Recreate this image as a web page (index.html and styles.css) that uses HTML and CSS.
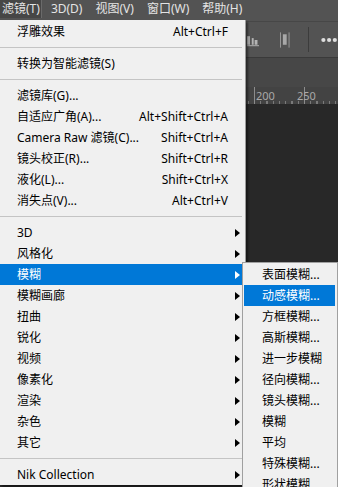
FILE: index.html
```html
<!DOCTYPE html>
<html lang="zh-CN">
<head>
    <meta charset="UTF-8">
    <meta name="viewport" content="width=device-width, initial-scale=1.0">
    <title>滤镜菜单</title>
    <link rel="stylesheet" href="styles.css">
</head>
<body>
    <div id="app">
        <div id="menubar">
            <span class="mb-item active">滤镜(T)</span>
            <span class="mb-item">3D(D)</span>
            <span class="mb-item">视图(V)</span>
            <span class="mb-item">窗口(W)</span>
            <span class="mb-item">帮助(H)</span>
        </div>
        <div id="toolbar">
            <svg class="ico-hist" width="13" height="14" viewBox="0 0 13 14">
                <rect x="0" y="3" width="3" height="9" fill="#b4b4b4"/>
                <rect x="5" y="5" width="2" height="7" fill="#b4b4b4"/>
                <rect x="8" y="7" width="3" height="5" fill="#b4b4b4"/>
                <rect x="0" y="12.5" width="13" height="1" fill="#b4b4b4"/>
            </svg>
            <svg class="ico-bracket" width="11" height="16" viewBox="0 0 11 16">
                <rect x="0" y="0" width="1" height="16" fill="#9a9a9a"/>
                <rect x="3" y="2" width="4" height="11" fill="#a8a8a8"/>
                <rect x="9" y="0" width="1" height="16" fill="#9a9a9a"/>
            </svg>
            <span class="tb-sep"></span>
            <svg class="ico-more" width="18" height="6" viewBox="0 0 18 6">
                <circle cx="2.5" cy="3" r="2.2" fill="#dedede"/>
                <circle cx="8.5" cy="3" r="2.2" fill="#dedede"/>
                <circle cx="14.5" cy="3" r="2.2" fill="#dedede"/>
            </svg>
        </div>
        <div id="options"></div>
        <div id="ruler"><span>200</span><span>250</span></div>
        <div id="canvas"></div>
    </div>

    <div class="menu">
        <div class="item"><span>浮雕效果</span><span>Alt+Ctrl+F</span></div>
        <div class="sep"></div>
        <div class="item"><span>转换为智能滤镜(S)</span></div>
        <div class="sep"></div>
        <div class="item"><span>滤镜库(G)...</span></div>
        <div class="item"><span>自适应广角(A)...</span><span>Alt+Shift+Ctrl+A</span></div>
        <div class="item"><span>Camera Raw 滤镜(C)...</span><span>Shift+Ctrl+A</span></div>
        <div class="item"><span>镜头校正(R)...</span><span>Shift+Ctrl+R</span></div>
        <div class="item"><span>液化(L)...</span><span>Shift+Ctrl+X</span></div>
        <div class="item"><span>消失点(V)...</span><span>Alt+Ctrl+V</span></div>
        <div class="sep"></div>
        <div class="item sub"><span>3D</span><i class="arrow"></i></div>
        <div class="item sub"><span>风格化</span><i class="arrow"></i></div>
        <div class="item sub active"><span>模糊</span><i class="arrow"></i></div>
        <div class="item sub"><span>模糊画廊</span><i class="arrow"></i></div>
        <div class="item sub"><span>扭曲</span><i class="arrow"></i></div>
        <div class="item sub"><span>锐化</span><i class="arrow"></i></div>
        <div class="item sub"><span>视频</span><i class="arrow"></i></div>
        <div class="item sub"><span>像素化</span><i class="arrow"></i></div>
        <div class="item sub"><span>渲染</span><i class="arrow"></i></div>
        <div class="item sub"><span>杂色</span><i class="arrow"></i></div>
        <div class="item sub"><span>其它</span><i class="arrow"></i></div>
        <div class="sep"></div>
        <div class="item sub"><span>Nik Collection</span><i class="arrow"></i></div>
    </div>

    <div class="submenu">
        <div class="item">表面模糊...</div>
        <div class="item active">动感模糊...</div>
        <div class="item">方框模糊...</div>
        <div class="item">高斯模糊...</div>
        <div class="item">进一步模糊</div>
        <div class="item">径向模糊...</div>
        <div class="item">镜头模糊...</div>
        <div class="item">模糊</div>
        <div class="item">平均</div>
        <div class="item">特殊模糊...</div>
        <div class="item">形状模糊...</div>
    </div>
</body>
</html>
```

FILE: styles.css
```css
body {
    margin: 0;
    width: 338px;
    height: 487px;
    overflow: hidden;
    position: relative;
    background: #282828;
    font-family: "Noto Sans", "Noto Sans CJK SC", sans-serif;
    font-size: 12px;
}
#app {
    display: flex;
    flex-direction: column;
    height: 100%;
}
#menubar {
    height: 21px;
    background: #535353;
    border-bottom: 1px solid #474747;
    display: flex;
    color: #e4e4e4;
}
.mb-item {
    line-height: 18px;
    height: 18px;
    padding: 0 1px 0 2px;
    margin-right: 10px;
    white-space: nowrap;
}
.mb-item.active {
    background: #464646;
    border-right: 1px solid #6a6a6a;
    margin-right: 7px;
}
#toolbar {
    height: 35px;
    background: #535353;
    border-bottom: 1px solid #3a3a3a;
    display: flex;
    align-items: center;
    padding-left: 247px;
}
.ico-hist {
    margin-right: 21px;
}
.ico-bracket {
    margin-right: 17px;
}
.tb-sep {
    width: 1px;
    height: 25px;
    background: #3c3c3c;
    margin-right: 12px;
}
#options {
    height: 29px;
    background: #474747;
}
#ruler {
    height: 17px;
    background-color: #434343;
    background-image:
        repeating-linear-gradient(to right, #8c8c8c 0 1px, transparent 1px 50px),
        repeating-linear-gradient(to right, #7a7a7a 0 1px, transparent 1px 6.25px);
    background-size: 100% 100%, 100% 3px;
    background-position: 4px 0, 4px 100%;
    background-repeat: no-repeat;
    display: flex;
    padding-left: 256px;
    color: #a9a9a9;
    font-size: 11px;
    line-height: 17px;
}
#ruler span {
    width: 50px;
}
#canvas {
    flex-grow: 1;
    background: #282828;
}

.menu {
    position: absolute;
    left: 0;
    top: 20px;
    width: 245px;
    padding-top: 1px;
    background: #f0f0f0;
    border-right: 1px solid #9a9a9a;
    box-shadow: 2px 2px 2px rgba(0, 0, 0, 0.45);
}
.item {
    display: flex;
    justify-content: space-between;
    align-items: center;
    height: 21px;
    line-height: 21px;
    padding: 0 17px 0 17px;
    color: #000;
    white-space: nowrap;
}
.item.sub {
    padding-right: 5px;
}
.item.active {
    background: #0078d7;
    color: #fff;
}
.arrow {
    width: 0;
    height: 0;
    border-left: 5px solid #000;
    border-top: 4px solid transparent;
    border-bottom: 4px solid transparent;
}
.item.active .arrow {
    border-left-color: #fff;
}
.sep {
    height: 1px;
    background: #c4c4c4;
    margin: 5px 3px 5px 0;
}
.submenu {
    position: absolute;
    left: 242px;
    top: 262px;
    width: 91px;
    padding: 1px 2px 1px 1px;
    background: #f0f0f0;
    border: 1px solid #a0a0a0;
}
.submenu .item {
    padding: 0 0 0 18px;
}
```
